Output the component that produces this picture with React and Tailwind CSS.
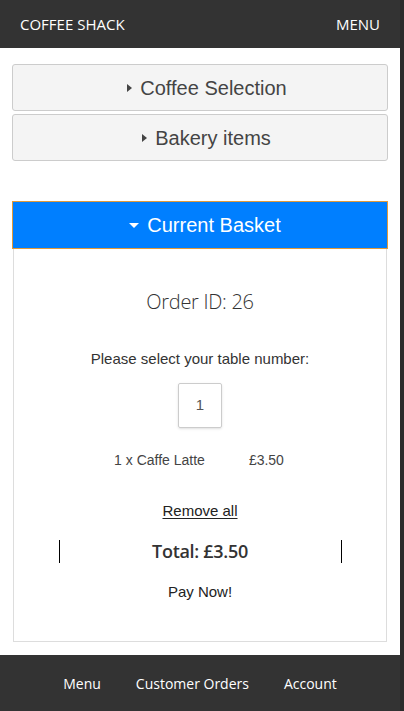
import React from 'react';

const Caret = ({ down }) => (
  <span
    className={
      down
        ? 'inline-block w-0 h-0 border-x-[5px] border-x-transparent border-t-[5px] border-t-white mr-2 align-middle'
        : 'inline-block w-0 h-0 border-y-[4px] border-y-transparent border-l-[5px] border-l-[#444] mr-2 align-middle'
    }
  />
);

const App = () => {
  return (
    <div className="flex h-[711px] w-[404px] overflow-hidden bg-white">
      <div className="flex flex-col w-[400px] h-full">
        {/* Header */}
        <header className="h-12 shrink-0 bg-[#333] flex items-center justify-between pl-5 pr-5 text-white text-[15px] font-['Open_Sans',sans-serif]">
          <span>COFFEE SHACK</span>
          <span>MENU</span>
        </header>

        {/* Content */}
        <main className="flex-1 pt-4 pl-3 pr-3 font-['Liberation_Sans',Arial,sans-serif]">
          <button className="w-full h-[47px] pl-[14px] bg-[#f4f4f4] border border-[#ccc] rounded-[3px] text-[20px] text-[#444] flex items-center justify-center">
            <Caret />
            Coffee Selection
          </button>
          <button className="w-full h-[47px] pl-[13px] mt-[3px] bg-[#f4f4f4] border border-[#ccc] rounded-[3px] text-[20px] text-[#444] flex items-center justify-center">
            <Caret />
            Bakery items
          </button>

          <button className="w-full h-[48px] pl-[10px] mt-10 bg-[#007fff] border border-[#e09a3a] text-[20px] text-white flex items-center justify-center">
            <Caret down />
            Current Basket
          </button>

          <section className="mx-px h-[393px] border border-t-0 border-[#ddd] bg-white flex flex-col items-center text-[#333]">
            <p className="mt-[38px] text-[20px] font-light font-['Open_Sans',sans-serif] tracking-[-0.3px]">Order ID: 26</p>
            <p className="mt-[31px] text-[15px] text-[#333]">Please select your table number:</p>
            <div className="mt-[12px] w-[44px] h-[45px] border border-[#ccc] rounded-[2px] shadow-sm flex items-center justify-center text-[15px] text-[#555]">
              1
            </div>
            <div className="mt-[22px] flex text-[14px] text-[#444] gap-[44px] pr-[2px]">
              <span>1 x Caffe Latte</span>
              <span>£3.50</span>
            </div>
            <a className="mt-[29px] text-[15px] text-[#222] underline underline-offset-2">Remove all</a>
            <div className="mt-[18px] w-[283px] h-[23px] border-x border-black flex items-center justify-center">
              <span className="text-[18px] font-semibold text-[#333] font-['Open_Sans',sans-serif] tracking-[-0.3px]">Total: £3.50</span>
            </div>
            <p className="mt-[18px] text-[15px] text-[#222]">Pay Now!</p>
          </section>
        </main>

        {/* Footer */}
        <footer className="h-[56px] shrink-0 bg-[#333] flex items-center justify-center gap-[35px] text-white text-[14px] font-['Open_Sans',sans-serif]">
          <span>Menu</span>
          <span>Customer Orders</span>
          <span>Account</span>
        </footer>
      </div>
      {/* scrollbar strip */}
      <div className="w-1 h-full bg-[#2b2b2b]" />
    </div>
  );
};

export default App;
